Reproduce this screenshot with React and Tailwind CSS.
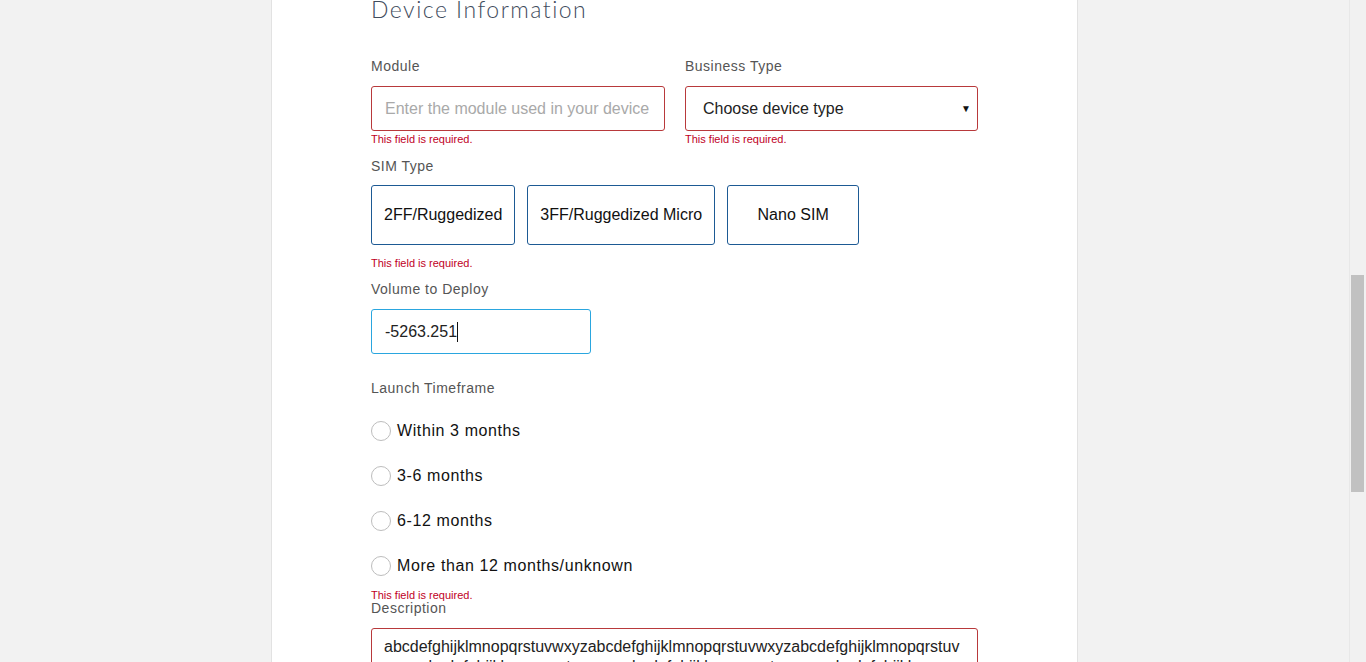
import { useState } from "react";

const simTypes = ["2FF/Ruggedized", "3FF/Ruggedized Micro", "Nano SIM"];
const timeframes = ["Within 3 months", "3-6 months", "6-12 months", "More than 12 months/unknown"];

function FieldError({ className = "" }) {
    return (
        <p className={`text-[11px] leading-[12px] text-[#c0001e] ${className}`}>This field is required.</p>
    );
}

function Label({ children, className = "" }) {
    return (
        <p className={`text-[14px] leading-5 tracking-[0.5px] text-[#555] ${className}`}>{children}</p>
    );
}

export default function App() {
    const [sim, setSim] = useState(null);
    const [timeframe, setTimeframe] = useState(null);
    const description = "abcdefghijklmnopqrstuvwxyz".repeat(6);

    return (
        <div className="h-[662px] w-full overflow-hidden flex bg-[#f2f2f2] font-['Liberation_Sans',Arial,sans-serif]">
            <div className="flex-1 flex justify-center">
                <div className="w-[807px] bg-white border-x border-[#e2e2e2] px-[99px]">
                    <h1 className="mt-[-5px] font-['Lato',sans-serif] font-light text-[23px] leading-[28px] tracking-[1.5px] text-[#3f4c5d]">
                        Device Information
                    </h1>

                    <div className="mt-[33px] grid grid-cols-[294px_293px] gap-x-5">
                        <div>
                            <Label>Module</Label>
                            <input
                                placeholder="Enter the module used in your device"
                                className="mt-[10px] w-full h-[45px] px-[13px] rounded-[3px] border border-[#b8393b] text-[16px] text-[#222] placeholder:text-[#a9a9a9] outline-none"
                            />
                            <FieldError className="mt-[2px]" />
                        </div>
                        <div>
                            <Label>Business Type</Label>
                            <div className="mt-[10px] w-full h-[45px] pl-[17px] pr-[6px] rounded-[3px] border border-[#b8393b] flex items-center justify-between text-[16px] text-[#222]">
                                <span>Choose device type</span>
                                <span className="text-[10px] text-[#111]">▼</span>
                            </div>
                            <FieldError className="mt-[2px]" />
                        </div>
                    </div>

                    <Label className="mt-[11px]">SIM Type</Label>
                    <div className="mt-[9px] flex gap-3">
                        {simTypes.map((s) => (
                            <button
                                key={s}
                                onClick={() => setSim(s)}
                                className={`h-[60px] min-w-[132px] px-3 rounded-[3px] border text-[16px] text-[#111] ${sim === s ? "border-[#2aa6df] bg-[#eef7fc]" : "border-[#1d5a94]"}`}
                            >
                                {s}
                            </button>
                        ))}
                    </div>
                    <FieldError className="mt-[12px]" />

                    <Label className="mt-[10px]">Volume to Deploy</Label>
                    <div className="mt-[10px] w-[220px] h-[45px] px-[13px] rounded-[3px] border border-[#2aa6df] flex items-center text-[16px] text-[#222]">
                        <span>-5263.251</span>
                        <span className="w-px h-[20px] bg-[#111]" />
                    </div>

                    <Label className="mt-[24px]">Launch Timeframe</Label>
                    <div className="mt-[10px]">
                        {timeframes.map((t) => (
                            <label key={t} className="h-[45px] flex items-center gap-[6px] cursor-pointer" onClick={() => setTimeframe(t)}>
                                <span className="w-5 h-5 rounded-full border border-[#bdbdbd] flex items-center justify-center">
                                    {timeframe === t && <span className="w-[10px] h-[10px] rounded-full bg-[#1d5a94]" />}
                                </span>
                                <span className="text-[16px] tracking-[0.6px] text-[#111]">{t}</span>
                            </label>
                        ))}
                    </div>
                    <FieldError className="mt-[1px]" />

                    <Label className="mt-[-3px]">Description</Label>
                    <textarea
                        defaultValue={description}
                        rows={4}
                        className="mt-[10px] block w-full px-[12px] pt-[8px] rounded-[3px] border border-[#b8393b] text-[16px] leading-5 text-[#222] resize-none outline-none break-all"
                    />
                </div>
            </div>

            <div className="w-[17px] bg-[#f1f1f1] border-l border-[#e8e8e8]">
                <div className="mt-[275px] ml-[1px] w-[13px] h-[217px] bg-[#c1c1c1]" />
            </div>
        </div>
    );
}
